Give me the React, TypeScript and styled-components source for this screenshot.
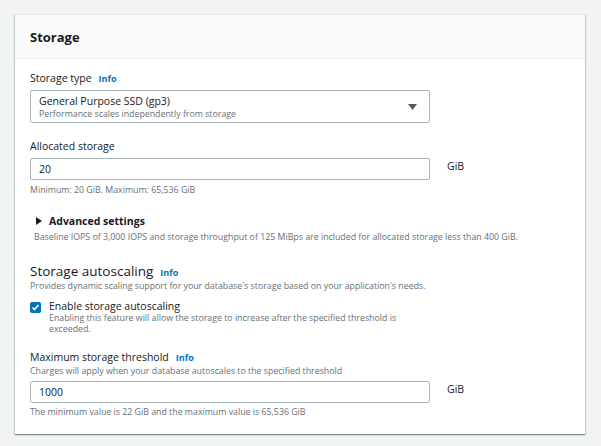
import React from "react";
import styled, { createGlobalStyle } from "styled-components";

const Global = createGlobalStyle`
  html, body { margin: 0; padding: 0; background: #f2f3f3; }
  body { font-family: "Open Sans", "Noto Sans", sans-serif; color: #16191f; }
  * { box-sizing: border-box; }
`;

const Page = styled.div`
  padding: 14px 16px 0 15px;
  width: 601px;
  height: 446px;
`;

const Card = styled.section`
  width: 570px;
  background: #fff;
  border-top: 1px solid #eaeded;
  box-shadow: 0 1px 1px 0 rgba(0, 28, 36, 0.3), 1px 1px 1px 0 rgba(0, 28, 36, 0.15),
    -1px 1px 1px 0 rgba(0, 28, 36, 0.15);
`;

const Header = styled.header`
  height: 44px;
  background: #fafafa;
  border-bottom: 1px solid #eaeded;
  display: flex;
  align-items: center;
  padding: 0 15px;
`;

const Title = styled.h2`
  margin: 0;
  font-size: 13px;
  font-weight: 700;
  line-height: 18px;
`;

const Body = styled.div`
  padding: 11px 15px 16px;
  display: flex;
  flex-direction: column;
`;

const Block = styled.div<{ $mt?: number }>`
  margin-top: ${(p) => p.$mt ?? 0}px;
  display: flex;
  flex-direction: column;
`;

const LabelRow = styled.div`
  display: flex;
  align-items: baseline;
  gap: 7px;
`;

const Label = styled.span`
  font-size: 10.5px;
  line-height: 16px;
`;

const BigLabel = styled.span`
  font-size: 13.5px;
  line-height: 18px;
`;

const Info = styled.a`
  font-size: 9px;
  font-weight: 700;
  color: #0073bb;
  text-decoration: none;
`;

const Hint = styled.div<{ $mt?: number; $indent?: number }>`
  font-size: 8.8px;
  line-height: 12px;
  color: #687078;
  margin-top: ${(p) => p.$mt ?? 0}px;
  padding-left: ${(p) => p.$indent ?? 0}px;
`;

const Select = styled.div`
  margin-top: 4px;
  width: 400px;
  height: 33px;
  border: 1px solid #aab7b8;
  border-radius: 2px;
  display: flex;
  align-items: center;
  justify-content: space-between;
  padding: 0 12px 0 8px;
`;

const SelectText = styled.div`
  display: flex;
  flex-direction: column;
`;

const SelectMain = styled.span`
  font-size: 10.5px;
  line-height: 14px;
`;

const InputRow = styled.div<{ $mt?: number }>`
  margin-top: ${(p) => p.$mt ?? 4}px;
  display: flex;
  align-items: flex-start;
  gap: 17px;
`;

const Input = styled.div`
  width: 400px;
  height: 22px;
  border: 1px solid #aab7b8;
  border-radius: 2px;
  padding: 0 8px;
  font-size: 10.5px;
  line-height: 20px;
`;

const Unit = styled.span`
  font-size: 10.5px;
  line-height: 16px;
`;

const Expander = styled.div`
  display: flex;
  align-items: center;
  gap: 7px;
  padding-left: 6px;
  font-size: 10.5px;
  font-weight: 700;
  line-height: 16px;
`;

const CheckRow = styled.div`
  margin-top: 7px;
  display: flex;
  gap: 8px;
`;

const Box = styled.span`
  margin-top: 3px;
  width: 11px;
  height: 11px;
  flex: none;
  border-radius: 2px;
  background: #0073bb;
  display: flex;
  align-items: center;
  justify-content: center;
`;

const CheckText = styled.div`
  display: flex;
  flex-direction: column;
`;

const CheckLabel = styled.span`
  font-size: 10.5px;
  line-height: 14px;
`;

const CheckDesc = styled.span`
  font-size: 8.8px;
  line-height: 11px;
  color: #687078;
  width: 360px;
`;

export default function App() {
  return (
    <Page>
      <Global />
      <Card>
        <Header>
          <Title>Storage</Title>
        </Header>
        <Body>
          <Block>
            <LabelRow>
              <Label>Storage type</Label>
              <Info>Info</Info>
            </LabelRow>
            <Select>
              <SelectText>
                <SelectMain>General Purpose SSD (gp3)</SelectMain>
                <Hint>Performance scales independently from storage</Hint>
              </SelectText>
              <svg width="9" height="6" viewBox="0 0 9 6">
                <path d="M0 0h9L4.5 6z" fill="#545b64" />
              </svg>
            </Select>
          </Block>

          <Block $mt={15}>
            <Label>Allocated storage</Label>
            <InputRow>
              <Input>20</Input>
              <Unit>GiB</Unit>
            </InputRow>
            <Hint $mt={4}>Minimum: 20 GiB. Maximum: 65,536 GiB</Hint>
          </Block>

          <Block $mt={17}>
            <Expander>
              <svg width="6" height="8" viewBox="0 0 6 8">
                <path d="M0 0l6 4-6 4z" fill="#16191f" />
              </svg>
              Advanced settings
            </Expander>
            <Hint $mt={2} $indent={4}>
              Baseline IOPS of 3,000 IOPS and storage throughput of 125 MiBps are included for allocated
              storage less than 400 GiB.
            </Hint>
          </Block>

          <Block $mt={19}>
            <LabelRow>
              <BigLabel>Storage autoscaling</BigLabel>
              <Info>Info</Info>
            </LabelRow>
            <Hint>Provides dynamic scaling support for your database's storage based on your application's needs.</Hint>
            <CheckRow>
              <Box>
                <svg width="9" height="9" viewBox="0 0 9 9">
                  <path d="M1.5 4.6l2 2 4-4.6" fill="none" stroke="#fff" strokeWidth="1.6" />
                </svg>
              </Box>
              <CheckText>
                <CheckLabel>Enable storage autoscaling</CheckLabel>
                <CheckDesc>
                  Enabling this feature will allow the storage to increase after the specified threshold is
                  exceeded.
                </CheckDesc>
              </CheckText>
            </CheckRow>
          </Block>

          <Block $mt={14}>
            <LabelRow>
              <Label>Maximum storage threshold</Label>
              <Info>Info</Info>
            </LabelRow>
            <Hint>Charges will apply when your database autoscales to the specified threshold</Hint>
            <InputRow>
              <Input>1000</Input>
              <Unit>GiB</Unit>
            </InputRow>
            <Hint $mt={3}>The minimum value is 22 GiB and the maximum value is 65,536 GiB</Hint>
          </Block>
        </Body>
      </Card>
    </Page>
  );
}
